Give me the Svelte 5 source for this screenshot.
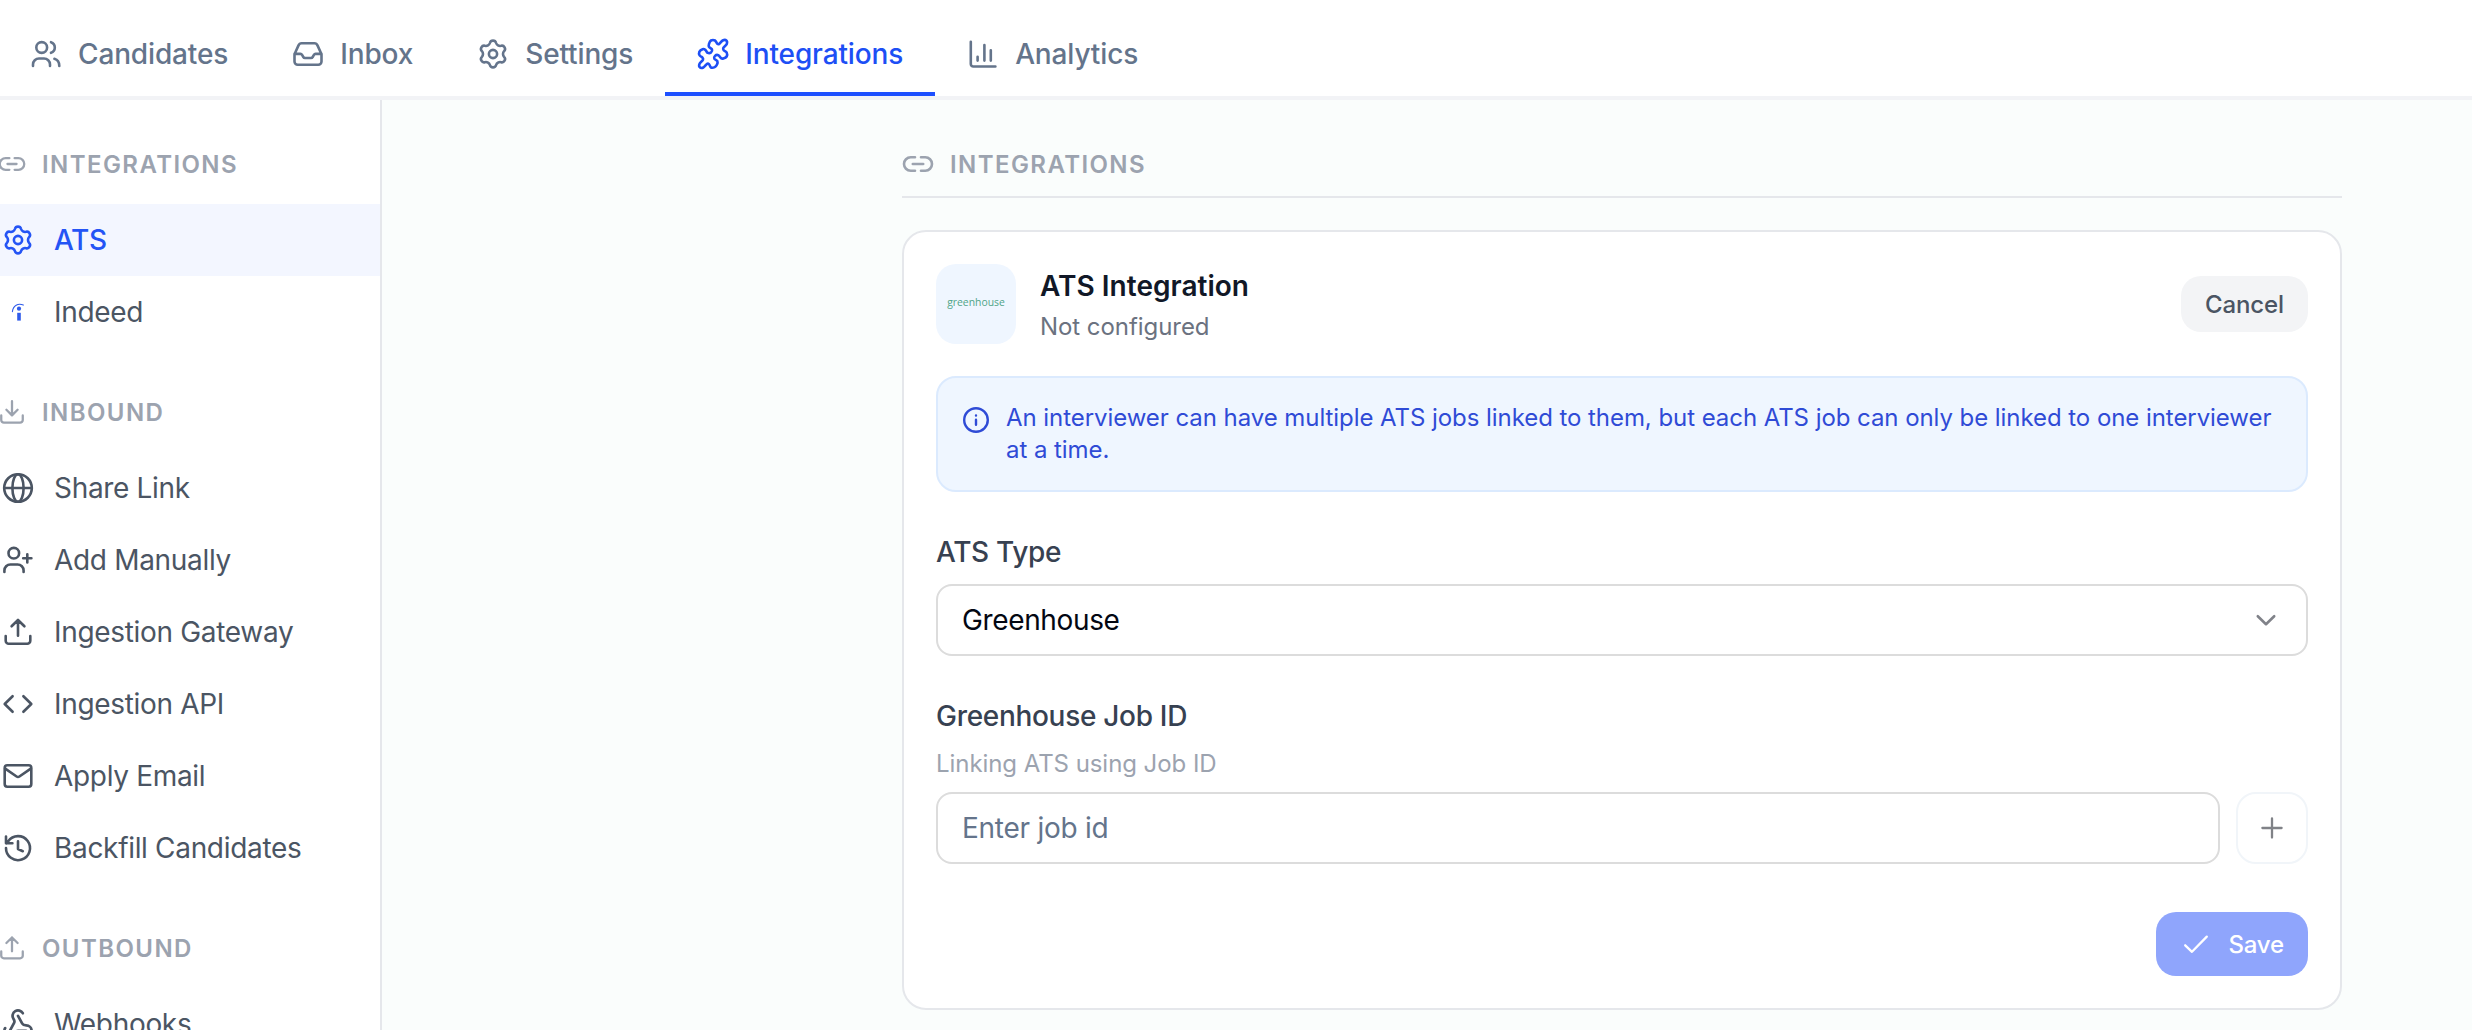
<script lang="ts">
  // ---- ICON HELPERS ----
  // Closed smooth curve through a list of points
  function smooth(points: number[][]) {
    const n = points.length;
    const at = (i: number) => points[(i + n) % n];
    let d = `M${points[0].join(' ')}`;
    for (let i = 0; i < n; i++) {
      const [p0, p1, p2, p3] = [at(i - 1), at(i), at(i + 1), at(i + 2)];
      d += `C${p1[0] + (p2[0] - p0[0]) / 6} ${p1[1] + (p2[1] - p0[1]) / 6} `;
      d += `${p2[0] - (p3[0] - p1[0]) / 6} ${p2[1] - (p3[1] - p1[1]) / 6} ${p2[0]} ${p2[1]}`;
    }
    return d + 'Z';
  }

  // Six-lobed cog, one lobe rotated around the centre
  function gear() {
    const lobe = [
      [-3.96, -9.26], [-3.4, -10], [-3.1, -11],
      [-2.6, -12.9], [-1.5, -13.4], [0, -13.4],
      [1.5, -13.4], [2.6, -12.9], [3.1, -11],
      [3.4, -10], [3.96, -9.26], [5, -8.66]
    ];
    let d = 'M-5-8.66';
    for (let k = 0; k < 6; k++) {
      const a = (k * Math.PI) / 3;
      const pts = lobe.map(([x, y]) =>
        `${(x * Math.cos(a) - y * Math.sin(a)).toFixed(2)} ${(x * Math.sin(a) + y * Math.cos(a)).toFixed(2)}`
      );
      d += 'C' + pts.join(' ');
    }
    return d + 'Z';
  }

  const puzzle = [
    [60, 41], [66, 31], [78, 31], [85, 41], [91, 41], [101, 31], [112, 31], [113, 42],
    [103, 53], [104, 60], [113, 67], [113, 79], [103, 85], [96, 84], [88, 75], [78, 77],
    [76, 86], [85, 93], [84, 103], [77, 111], [66, 112], [60, 102], [54, 101], [43, 112],
    [32, 111], [32, 100], [42, 89], [40, 82], [32, 76], [31, 65], [41, 57], [49, 59],
    [56, 68], [66, 67], [69, 58], [60, 50]
  ].map(([x, y]) => [(x - 72) / 3, (y - 71.5) / 3]);

  // All drawings are centred on 0,0
  const icons: Record<string, string> = {
    users: '<circle cx="-4.3" cy="-6.5" r="5.4"/><path d="M-13 12V10.5a6 6 0 0 1 6-6H-2a6 6 0 0 1 6 6V12M5-11.8A5.6 5.6 0 0 1 5-1.2M8.4 4.8C11.7 5.8 13.3 8.5 13.3 12"/>',
    inbox: '<path d="M-13.5.2 -9.5-8.6A3.4 3.4 0 0 1-6.4-10.7H6.4A3.4 3.4 0 0 1 9.5-8.6L13.5.2V7.5a3.2 3.2 0 0 1-3.2 3.2H-10.3a3.2 3.2 0 0 1-3.2-3.2ZM-13.5-.1H-7.6a2 2 0 0 1 1.7 1l1.2 2.1a2 2 0 0 0 1.7 1H3a2 2 0 0 0 1.7-1l1.2-2.1a2 2 0 0 1 1.7-1H13.5"/>',
    gear: `<path d="${gear()}"/><circle r="4.1"/>`,
    puzzle: `<path d="${smooth(puzzle)}"/>`,
    chart: '<path d="M-12.2-12.3V10a2.5 2.5 0 0 0 2.5 2.5H12.4M-5.4 2.8V6.6M1.4-9V6.6M7.8-3.8V6.6"/>',
    link: '<path d="M-3-6.7H-7.3a6.7 6.7 0 0 0 0 13.4H-3M3-6.7H7.3a6.7 6.7 0 0 1 0 13.4H3M-5.2 0H5.2"/>',
    download: '<path d="M-12.3 4V9.2a3 3 0 0 0 3 3H9.3a3 3 0 0 0 3-3V4M0-12.4V3.6M-6.4-2.6 0 3.8 6.4-2.6"/>',
    upload: '<path d="M-12.3 4V8.8a3 3 0 0 0 3 3H9.3a3 3 0 0 0 3-3V4M0 3.8V-12M-6.4-5.7 0-12 6.4-5.7"/>',
    indeed: '<circle cx="1" cy="-3.3" r="2.1" fill="currentColor" stroke="none"/><path d="M1 2.6V6.8" stroke-width="3.6" stroke-linecap="square"/><path d="M-5.6-.4C-5-6.3 .2-9.4 5.3-6.9" stroke-width="1.1"/>',
    globe: '<circle r="13.8"/><ellipse rx="5.6" ry="13.8"/><path d="M-13.8 0H13.8"/>',
    userPlus: '<circle cx="-4.2" cy="-6.8" r="5.3"/><path d="M-13.6 12V10.5a6 6 0 0 1 6-6H-.4a6 6 0 0 1 6 6V12M5.2-1.7H13.4M9.3-5.8V2.4"/>',
    code: '<path d="M-5.4-7.8-13.3 0-5.4 7.8M5.4-7.8 13.3 0 5.4 7.8"/>',
    mail: '<rect x="-13.3" y="-10.7" width="26.6" height="21.4" rx="2.6"/><path d="M-12.8-7.4-1.4.5a2.4 2.4 0 0 0 2.8 0L12.8-7.4"/>',
    history: '<path d="M-12 0A12 12 0 1 0-9.8-6.8L-11.8-4.6M-12-11.4V-4.8H-5.6M0-6.6V1L4.8 3.2"/>',
    webhook: '<g transform="scale(1.36) translate(-12 -12)" stroke-width="2"><path d="M18 16.98h-5.99c-1.1 0-1.95.94-2.48 1.9A4 4 0 0 1 2 17c.01-.7.2-1.4.57-2"/><path d="m6 17 3.13-5.78c.53-.97.1-2.18-.5-3.1a4 4 0 1 1 6.89-4.06"/><path d="m12 6 3.13 5.73C15.66 12.7 16.9 13 18 13a4 4 0 0 1 0 8"/></g>',
    info: '<circle r="11.8"/><path d="M0-.3V4.8M0-4.6V-4.4"/>',
    chevron: '<path d="M-8.2-3.8 0 4.2 8.2-3.8"/>',
    plus: '<path d="M-9.6 0H9.6M0-9.6V9.6"/>',
    check: '<path d="M-10.8 1.3-4 7.8 10.8-7.4"/>'
  };

  const tabs = [
    { label: 'Candidates', icon: 'users' },
    { label: 'Inbox', icon: 'inbox' },
    { label: 'Settings', icon: 'gear' },
    { label: 'Integrations', icon: 'puzzle' },
    { label: 'Analytics', icon: 'chart' }
  ];

  const sections = [
    {
      title: 'Integrations',
      icon: 'link',
      items: [
        { label: 'ATS', icon: 'gear' },
        { label: 'Indeed', icon: 'indeed' }
      ]
    },
    {
      title: 'Inbound',
      icon: 'download',
      items: [
        { label: 'Share Link', icon: 'globe' },
        { label: 'Add Manually', icon: 'userPlus' },
        { label: 'Ingestion Gateway', icon: 'upload' },
        { label: 'Ingestion API', icon: 'code' },
        { label: 'Apply Email', icon: 'mail' },
        { label: 'Backfill Candidates', icon: 'history' }
      ]
    },
    {
      title: 'Outbound',
      icon: 'upload',
      items: [{ label: 'Webhooks', icon: 'webhook' }]
    }
  ];

  let activeTab = $state('Integrations');
  let activeItem = $state('ATS');
  let jobId = $state('');
</script>

{#snippet icon(name: string, size = 32, box = size, stroke = 2.6)}
  <svg
    class="icon icon-{name}"
    width={size}
    height={size}
    viewBox="{-box / 2} {-box / 2} {box} {box}"
    stroke-width={stroke}
  >
    {@html icons[name]}
  </svg>
{/snippet}

<div class="app">
  <nav class="tabs">
    {#each tabs as tab}
      <button class="tab" class:active={tab.label === activeTab} onclick={() => (activeTab = tab.label)}>
        {@render icon(tab.icon)}
        <span>{tab.label}</span>
      </button>
    {/each}
  </nav>

  <div class="body">
    <aside>
      {#each sections as section}
        <section>
          <h2 class="heading">
            {@render icon(section.icon, 28, 32)}
            <span>{section.title}</span>
          </h2>
          {#each section.items as item}
            <button class="item" class:active={item.label === activeItem} onclick={() => (activeItem = item.label)}>
              {@render icon(item.icon, 36)}
              <span>{item.label}</span>
            </button>
          {/each}
        </section>
      {/each}
    </aside>

    <main>
      <h2 class="heading main-heading">
        {@render icon('link')}
        <span>Integrations</span>
      </h2>

      <div class="card">
        <header>
          <div class="logo">greenhouse</div>
          <div class="titles">
            <h3>ATS Integration</h3>
            <p>Not configured</p>
          </div>
          <button class="cancel">Cancel</button>
        </header>

        <div class="notice">
          {@render icon('info', 28, 28, 2.4)}
          <p>An interviewer can have multiple ATS jobs linked to them, but each ATS job can only be linked to one interviewer at a time.</p>
        </div>

        <div class="field">
          <span class="label">ATS Type</span>
          <button class="select">
            <span>Greenhouse</span>
            {@render icon('chevron')}
          </button>
        </div>

        <div class="field">
          <label class="label" for="job-id">Greenhouse Job ID</label>
          <span class="hint">Linking ATS using Job ID</span>
          <div class="row">
            <input id="job-id" placeholder="Enter job id" bind:value={jobId} />
            <button class="add" aria-label="Add job id">{@render icon('plus', 32, 32, 2.3)}</button>
          </div>
        </div>

        <button class="save">
          {@render icon('check', 28, 28, 2.3)}
          <span>Save</span>
        </button>
      </div>
    </main>
  </div>
</div>

<style>
  :global(body) {
    background: #fafdfc;
    overflow: hidden;
  }
  .app {
    height: 1030px;
    display: flex;
    flex-direction: column;
    overflow: hidden;
    font-family: Inter, "Liberation Sans", sans-serif;
    font-size: 28px;
    letter-spacing: -0.06px;
    color: #4b5563;
  }
  button, input {
    font: inherit;
    letter-spacing: inherit;
    color: inherit;
    background: none;
    border: none;
    padding: 0;
    margin: 0;
    box-sizing: border-box;
    white-space: nowrap;
  }
  button {
    cursor: pointer;
  }
  h2, h3, p {
    margin: 0;
  }
  .icon {
    display: block;
    flex-shrink: 0;
    overflow: visible;
    fill: none;
    stroke: currentColor;
    stroke-linecap: round;
    stroke-linejoin: round;
  }

  .tabs {
    display: flex;
    flex-shrink: 0;
    margin-left: -2px;
    padding-top: 16px;
    background: #fff;
    border-bottom: 4px solid #f2f3f6;
  }
  .tab {
    display: flex;
    align-items: center;
    gap: 16px;
    height: 80px;
    padding: 0 32px;
    font-weight: 500;
    letter-spacing: -0.14px;
    color: #64748b;
    border-bottom: 4px solid transparent;
  }
  .tab.active {
    color: #1d4ff5;
    border-color: #1d4fff;
  }

  .body {
    display: flex;
    flex: 1;
    min-height: 0;
  }
  aside {
    width: 382px;
    flex-shrink: 0;
    box-sizing: border-box;
    background: #fff;
    border-right: 2px solid #e5e7eb;
    overflow: hidden;
  }
  section {
    padding-top: 44px;
  }
  .heading {
    display: flex;
    align-items: center;
    gap: 16px;
    height: 40px;
    margin: 0 0 20px -2px;
    font-size: 24px;
    line-height: 38px;
    font-weight: 600;
    letter-spacing: 1.42px;
    text-transform: uppercase;
    color: #9ca3af;
  }
  .heading span {
    padding-top: 2px;
  }
  .item {
    display: flex;
    align-items: center;
    gap: 18px;
    width: 100%;
    height: 72px;
    letter-spacing: -0.32px;
  }
  .item.active {
    background: #f3f6ff;
    color: #2454f5;
    font-weight: 500;
  }
  .icon-indeed {
    color: #2f5bea;
  }

  main {
    width: 1440px;
    margin-left: 520px;
    padding-top: 44px;
  }
  .main-heading {
    margin: 0 0 32px;
    padding-bottom: 12px;
    border-bottom: 2px solid #e5e7eb;
  }
  .card {
    box-sizing: border-box;
    height: 780px;
    padding: 32px;
    display: flex;
    flex-direction: column;
    background: #fff;
    border: 2px solid #e5e7eb;
    border-radius: 24px;
  }
  header {
    display: flex;
    align-items: center;
    height: 80px;
    margin-bottom: 32px;
  }
  .logo {
    display: flex;
    align-items: center;
    justify-content: center;
    box-sizing: border-box;
    width: 80px;
    height: 80px;
    padding-bottom: 5px;
    border-radius: 20px;
    background: #eff6ff;
    color: #4fa588;
    font: 10.4px "Open Sans", sans-serif;
    letter-spacing: 0;
  }
  .titles {
    flex: 1;
    margin: 4px 0 0 24px;
    line-height: 40px;
  }
  h3 {
    font-size: 28px;
    font-weight: 600;
    letter-spacing: 0.03px;
    color: #111827;
  }
  .titles p {
    padding-top: 1px;
    line-height: 39px;
    font-size: 24px;
    color: #6b7280;
  }
  .cancel {
    height: 56px;
    padding: 0 24px;
    border-radius: 20px;
    background: #f3f4f6;
    font-size: 24px;
    font-weight: 500;
    letter-spacing: -0.1px;
  }
  .notice {
    display: flex;
    gap: 16px;
    box-sizing: border-box;
    height: 116px;
    padding: 24px;
    background: #eff6ff;
    border: 2px solid #dbeafe;
    border-radius: 20px;
    font-size: 24px;
    line-height: 32px;
    color: #2f4bd6;
  }
  .notice .icon {
    margin-top: 4px;
  }
  .field {
    display: flex;
    flex-direction: column;
    margin-top: 40px;
  }
  .label {
    margin-bottom: 12px;
    line-height: 40px;
    font-weight: 500;
    letter-spacing: -0.3px;
    color: #374151;
  }
  .hint {
    margin-bottom: 12px;
    font-size: 24px;
    line-height: 32px;
    color: #9ca3af;
  }
  .select, input {
    height: 72px;
    padding: 0 24px;
    background: #fff;
    border: 2px solid #dcdcdc;
    border-radius: 16px;
    letter-spacing: -0.36px;
  }
  .select {
    display: flex;
    align-items: center;
    justify-content: space-between;
    color: #030712;
  }
  .select .icon {
    color: #808289;
  }
  .row {
    display: flex;
    gap: 16px;
  }
  input {
    flex: 1;
    letter-spacing: -0.25px;
  }
  input::placeholder {
    color: #64748b;
    opacity: 1;
  }
  .add {
    display: flex;
    align-items: center;
    justify-content: center;
    width: 72px;
    height: 72px;
    border: 2px solid #f1f5f9;
    border-radius: 20px;
    color: #808287;
  }
  .save {
    display: flex;
    align-items: center;
    align-self: flex-end;
    gap: 18px;
    height: 64px;
    margin-top: 48px;
    padding: 0 24px 0 26px;
    border-radius: 20px;
    background: #8fa5fc;
    color: #fff;
    font-size: 24px;
    font-weight: 500;
    letter-spacing: -0.15px;
  }
</style>
